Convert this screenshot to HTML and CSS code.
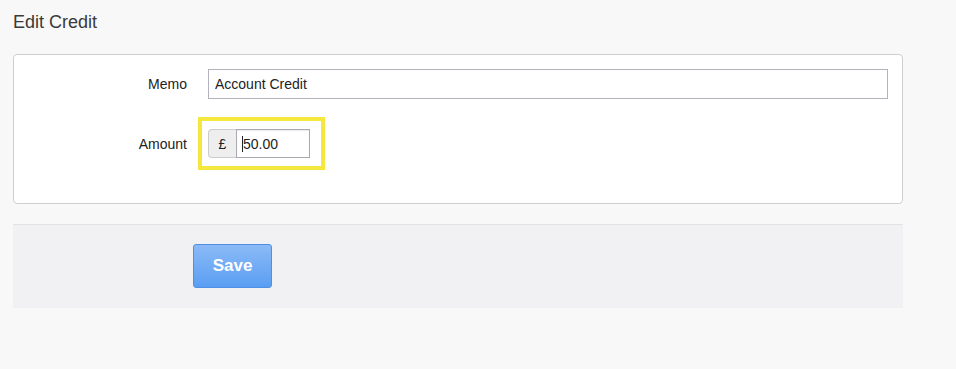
FILE: index.html
```html
<!DOCTYPE html>
<html lang="en-GB">
  <head>
    <meta charset="utf-8">
    <title>Edit Credit</title>
    <link rel="stylesheet" href="styles.css">
  </head>
  <body>
    <main class="page">
      <h1 class="pageTitle">Edit Credit</h1>

      <section class="card">
        <div class="formRow">
          <label for="memo" class="rowLabel">Memo</label>
          <input type="text" id="memo" class="textField" value="Account Credit">
        </div>

        <div class="formRow">
          <label for="amount" class="rowLabel">Amount</label>
          <div class="rowValue">
            <div class="highlight">
              <div class="inputGroup">
                <span class="addon">£</span>
                <span class="caretWrap">
                  <input type="text" id="amount" class="amountField" value="50.00">
                </span>
              </div>
            </div>
          </div>
        </div>
      </section>

      <div class="actions">
        <button class="saveBtn">Save</button>
      </div>
    </main>
  </body>
</html>
```

FILE: styles.css
```css
html {
  font-family: "Liberation Sans", Arial, sans-serif;
}

body {
  margin: 0;
  background-color: #f8f8f8;
  color: #333;
}

.page {
  width: 890px;
  padding-left: 13px;
}

.pageTitle {
  font-size: 18px;
  font-weight: normal;
  line-height: 22px;
  margin: 0;
  padding: 11px 0 21px 0;
  color: #3a3a3a;
}

.card {
  background-color: #fff;
  border: 1px solid #cfcfcf;
  border-radius: 4px;
  padding: 14px 14px 45px 14px;
}

.formRow {
  display: grid;
  grid-template-columns: 159px 1fr;
  column-gap: 21px;
  align-items: center;
}

.formRow + .formRow {
  margin-top: 30px;
}

.rowLabel {
  text-align: right;
  font-size: 14px;
  color: #222;
}

.textField {
  height: 30px;
  box-sizing: border-box;
  border: 1px solid #b4b2be;
  padding: 0 6px;
  font-family: inherit;
  font-size: 14px;
  color: #222;
  outline: none;
}

.rowValue {
  display: flex;
  height: 29px;
  align-items: center;
}

/* yellow marker drawn around the amount field */
.highlight {
  display: inline-flex;
  border: 4px solid #f4e83e;
  padding: 8px 11px 8px 6px;
  margin-left: -10px;
}

.inputGroup {
  display: flex;
  height: 29px;
}

.addon {
  width: 27px;
  display: flex;
  justify-content: center;
  align-items: center;
  background-color: #eee;
  border: 1px solid #ccc;
  border-right: none;
  border-radius: 4px 0 0 4px;
  font-size: 14px;
  color: #222;
}

.caretWrap {
  position: relative;
  display: flex;
}

.caretWrap::before {
  content: "";
  position: absolute;
  left: 6px;
  top: 7px;
  width: 1px;
  height: 16px;
  background-color: #222;
}

.amountField {
  width: 74px;
  height: 29px;
  box-sizing: border-box;
  border: 1px solid #aaa9b2;
  box-shadow: inset 0 1px 1px rgba(0, 0, 0, 0.08);
  padding: 0 6px;
  font-family: inherit;
  font-size: 14px;
  color: #222;
  outline: none;
}

.actions {
  margin-top: 20px;
  background-color: #f1f1f3;
  border-top: 1px solid #e2e2e2;
  padding: 19px 0 20px 180px;
}

.saveBtn {
  width: 79px;
  height: 44px;
  border: 1px solid #4f90e6;
  border-radius: 3px;
  background: linear-gradient(#8bbaf7, #5a9ef2);
  color: #fff;
  font-family: inherit;
  font-weight: bold;
  font-size: 17px;
}
```
